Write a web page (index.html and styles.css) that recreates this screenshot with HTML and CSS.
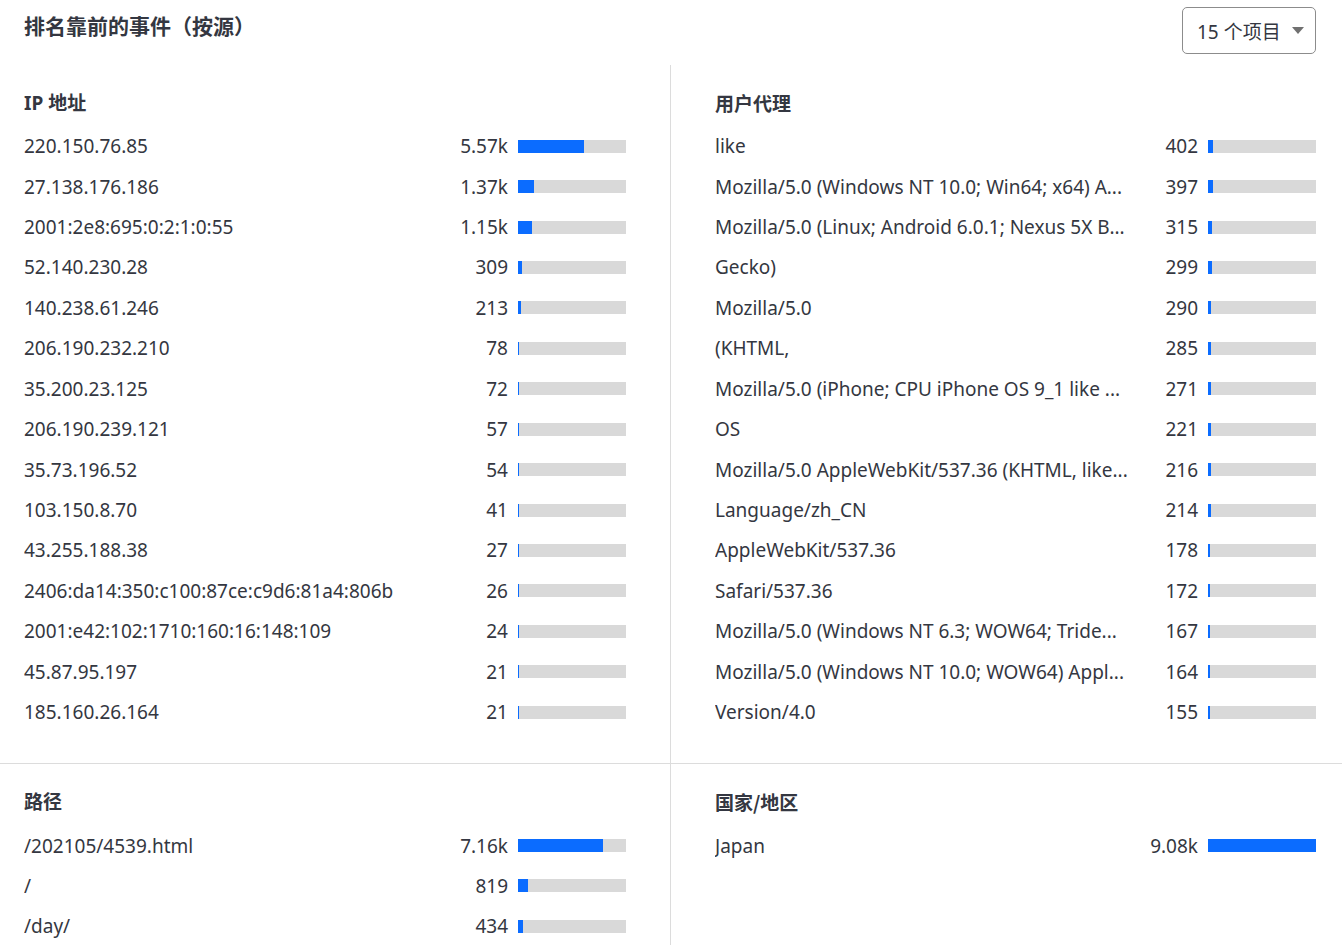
FILE: index.html
```html
<!DOCTYPE html>
<html lang="zh-CN">
<head>
<meta charset="utf-8">
<title>排名靠前的事件（按源）</title>
<link rel="stylesheet" href="styles.css">
</head>
<body>
<header class="top">
  <h1 class="title">排名靠前的事件（按源）</h1>
  <button class="select">15 个项目<span class="caret"></span></button>
</header>
<main class="grid">
  <section class="cell cell-left">
    <h2 class="cell-title">IP 地址</h2>
    <ul class="rows">
      <li class="row"><span class="label">220.150.76.85</span><span class="num">5.57k</span><span class="bar"><span class="fill" style="width:66.3px"></span></span></li>
      <li class="row"><span class="label">27.138.176.186</span><span class="num">1.37k</span><span class="bar"><span class="fill" style="width:16.3px"></span></span></li>
      <li class="row"><span class="label">2001:2e8:695:0:2:1:0:55</span><span class="num">1.15k</span><span class="bar"><span class="fill" style="width:13.7px"></span></span></li>
      <li class="row"><span class="label">52.140.230.28</span><span class="num">309</span><span class="bar"><span class="fill" style="width:3.7px"></span></span></li>
      <li class="row"><span class="label">140.238.61.246</span><span class="num">213</span><span class="bar"><span class="fill" style="width:2.5px"></span></span></li>
      <li class="row"><span class="label">206.190.232.210</span><span class="num">78</span><span class="bar"><span class="fill" style="width:0.9px"></span></span></li>
      <li class="row"><span class="label">35.200.23.125</span><span class="num">72</span><span class="bar"><span class="fill" style="width:0.9px"></span></span></li>
      <li class="row"><span class="label">206.190.239.121</span><span class="num">57</span><span class="bar"><span class="fill" style="width:0.7px"></span></span></li>
      <li class="row"><span class="label">35.73.196.52</span><span class="num">54</span><span class="bar"><span class="fill" style="width:0.6px"></span></span></li>
      <li class="row"><span class="label">103.150.8.70</span><span class="num">41</span><span class="bar"><span class="fill" style="width:0.5px"></span></span></li>
      <li class="row"><span class="label">43.255.188.38</span><span class="num">27</span><span class="bar"><span class="fill" style="width:0.3px"></span></span></li>
      <li class="row"><span class="label">2406:da14:350:c100:87ce:c9d6:81a4:806b</span><span class="num">26</span><span class="bar"><span class="fill" style="width:0.3px"></span></span></li>
      <li class="row"><span class="label">2001:e42:102:1710:160:16:148:109</span><span class="num">24</span><span class="bar"><span class="fill" style="width:0.3px"></span></span></li>
      <li class="row"><span class="label">45.87.95.197</span><span class="num">21</span><span class="bar"><span class="fill" style="width:0.2px"></span></span></li>
      <li class="row"><span class="label">185.160.26.164</span><span class="num">21</span><span class="bar"><span class="fill" style="width:0.2px"></span></span></li>
    </ul>
  </section>
  <section class="cell cell-right">
    <h2 class="cell-title">用户代理</h2>
    <ul class="rows">
      <li class="row"><span class="label">like</span><span class="num">402</span><span class="bar"><span class="fill" style="width:4.8px"></span></span></li>
      <li class="row"><span class="label">Mozilla/5.0 (Windows NT 10.0; Win64; x64) A...</span><span class="num">397</span><span class="bar"><span class="fill" style="width:4.7px"></span></span></li>
      <li class="row"><span class="label">Mozilla/5.0 (Linux; Android 6.0.1; Nexus 5X B...</span><span class="num">315</span><span class="bar"><span class="fill" style="width:3.7px"></span></span></li>
      <li class="row"><span class="label">Gecko)</span><span class="num">299</span><span class="bar"><span class="fill" style="width:3.6px"></span></span></li>
      <li class="row"><span class="label">Mozilla/5.0</span><span class="num">290</span><span class="bar"><span class="fill" style="width:3.4px"></span></span></li>
      <li class="row"><span class="label">(KHTML,</span><span class="num">285</span><span class="bar"><span class="fill" style="width:3.4px"></span></span></li>
      <li class="row"><span class="label">Mozilla/5.0 (iPhone; CPU iPhone OS 9_1 like ...</span><span class="num">271</span><span class="bar"><span class="fill" style="width:3.2px"></span></span></li>
      <li class="row"><span class="label">OS</span><span class="num">221</span><span class="bar"><span class="fill" style="width:2.6px"></span></span></li>
      <li class="row"><span class="label">Mozilla/5.0 AppleWebKit/537.36 (KHTML, like...</span><span class="num">216</span><span class="bar"><span class="fill" style="width:2.6px"></span></span></li>
      <li class="row"><span class="label">Language/zh_CN</span><span class="num">214</span><span class="bar"><span class="fill" style="width:2.5px"></span></span></li>
      <li class="row"><span class="label">AppleWebKit/537.36</span><span class="num">178</span><span class="bar"><span class="fill" style="width:2.1px"></span></span></li>
      <li class="row"><span class="label">Safari/537.36</span><span class="num">172</span><span class="bar"><span class="fill" style="width:2px"></span></span></li>
      <li class="row"><span class="label">Mozilla/5.0 (Windows NT 6.3; WOW64; Tride...</span><span class="num">167</span><span class="bar"><span class="fill" style="width:2px"></span></span></li>
      <li class="row"><span class="label">Mozilla/5.0 (Windows NT 10.0; WOW64) Appl...</span><span class="num">164</span><span class="bar"><span class="fill" style="width:2px"></span></span></li>
      <li class="row"><span class="label">Version/4.0</span><span class="num">155</span><span class="bar"><span class="fill" style="width:1.8px"></span></span></li>
    </ul>
  </section>
  <section class="cell cell-left cell-bottom">
    <h2 class="cell-title">路径</h2>
    <ul class="rows">
      <li class="row"><span class="label">/202105/4539.html</span><span class="num">7.16k</span><span class="bar"><span class="fill" style="width:85.2px"></span></span></li>
      <li class="row"><span class="label">/</span><span class="num">819</span><span class="bar"><span class="fill" style="width:9.7px"></span></span></li>
      <li class="row"><span class="label">/day/</span><span class="num">434</span><span class="bar"><span class="fill" style="width:5.2px"></span></span></li>
    </ul>
  </section>
  <section class="cell cell-right cell-bottom">
    <h2 class="cell-title">国家/地区</h2>
    <ul class="rows">
      <li class="row"><span class="label">Japan</span><span class="num">9.08k</span><span class="bar"><span class="fill" style="width:108px"></span></span></li>
    </ul>
  </section>
</main>
</body>
</html>
```

FILE: styles.css
```css
html, body {
  margin: 0;
  padding: 0;
  background: #ffffff;
}
body {
  font-family: "Noto Sans", "Noto Sans CJK SC", sans-serif;
  font-size: 19px;
  color: #343741;
}
.top {
  display: flex;
  justify-content: space-between;
  align-items: flex-start;
  height: 65px;
  padding: 7px 26px 0 24px;
  box-sizing: border-box;
}
.title {
  margin: 0;
  font-size: 21px;
  font-weight: 700;
  line-height: 36px;
  font-family: "Noto Sans CJK SC", "Noto Sans", sans-serif;
}
.select {
  display: flex;
  align-items: center;
  height: 47px;
  width: 134px;
  padding: 0 0 0 14px;
  box-sizing: border-box;
  border: 1px solid #8c8c8c;
  border-radius: 5px;
  background: #fff;
  font-family: "Noto Sans", "Noto Sans CJK SC", sans-serif;
  font-size: 19px;
  color: #343741;
}
.caret {
  width: 0;
  height: 0;
  margin-left: 11px;
  border-left: 6.5px solid transparent;
  border-right: 6.5px solid transparent;
  border-top: 7px solid #707070;
}
.grid {
  display: grid;
  grid-template-columns: 671px 1fr;
}
.cell {
  padding-top: 24px;
  padding-bottom: 31px;
  box-sizing: border-box;
  min-width: 0;
}
.cell-left {
  padding-left: 24px;
  padding-right: 44px;
  border-right: 1px solid #dcdcdc;
}
.cell-right {
  padding-left: 44px;
  padding-right: 26px;
}
.cell-bottom {
  border-top: 1px solid #dcdcdc;
  padding-bottom: 0;
}
.cell-title {
  margin: 0 0 9px;
  font-size: 19px;
  font-weight: 700;
  line-height: 28px;
  font-family: "Noto Sans CJK SC", "Noto Sans", sans-serif;
}
.cell-left .cell-title {
  font-family: "Noto Sans", "Noto Sans CJK SC", sans-serif;
}
.rows {
  list-style: none;
  margin: 0;
  padding: 0;
}
.row {
  display: flex;
  align-items: center;
  height: 40.43px;
}
.label {
  flex: 1;
  min-width: 0;
  white-space: nowrap;
  overflow: hidden;
}
.num {
  width: 56px;
  flex: none;
  text-align: right;
}
.bar {
  flex: none;
  width: 108px;
  height: 13px;
  margin-left: 10px;
  background: #d9d9d9;
  display: flex;
}
.fill {
  display: block;
  height: 100%;
  min-width: 1px;
  background: #0b6cff;
}
```
